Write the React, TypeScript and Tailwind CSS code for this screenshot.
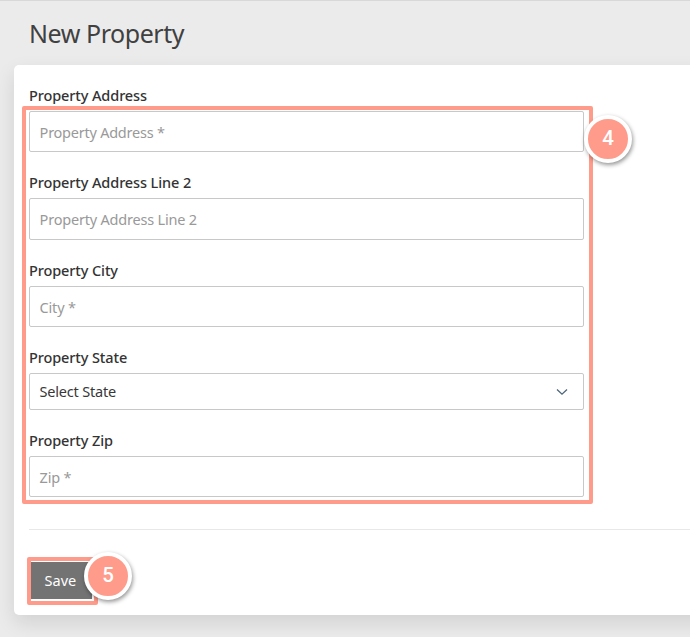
import React from "react";

type FieldProps = {
  label: string;
  placeholder: string;
  boxClass: string;
  placeholderClass: string;
};

function Label({ text }: { text: string }) {
  return (
    <label className="flex h-[31px] items-center text-[14.5px] font-medium text-[#333]">
      <span className="whitespace-nowrap tracking-[-0.11px]">{text}</span>
    </label>
  );
}

function Field({ label, placeholder, boxClass, placeholderClass }: FieldProps) {
  return (
    <div>
      <Label text={label} />
      <div className={`flex items-center rounded-[2px] border border-[#c8c8c8] bg-white pl-[9.6px] text-[14.5px] text-[#999] ${boxClass}`}>
        <span className={`whitespace-nowrap ${placeholderClass}`}>{placeholder}</span>
      </div>
    </div>
  );
}

function Step({ value, className }: { value: number; className: string }) {
  return (
    <div
      className={`absolute flex size-12 items-center justify-center rounded-full border-4 border-white bg-[#ff9b8a] pb-[2px] font-[Roboto,sans-serif] text-[20.5px] font-medium text-white shadow-[1px_2px_4px_rgba(0,0,0,0.42)] ${className}`}
    >
      {value}
    </div>
  );
}

export default function App() {
  return (
    <div className="h-[637px] w-[690px] overflow-hidden border-t border-[#d8d8d8] bg-[#ebebeb] pl-[14px] font-['Noto_Sans','Open_Sans',sans-serif]">
      <h1 className="flex h-16 items-center pt-[1px] pl-[15px] text-[25px] font-normal text-[#404040]">
        <span className="whitespace-nowrap tracking-[-0.44px]">New Property</span>
      </h1>
      <main className="h-[550px] w-[720px] rounded-[5px] bg-white pt-[15px] pl-[15px] shadow-[0_8px_20px_rgba(0,0,0,0.11)]">
        <form className="relative w-[555px]">
          <div className="flex flex-col gap-[15px]">
            <Field label="Property Address" placeholder="Property Address *" boxClass="h-[41px] pt-[3px]" placeholderClass="tracking-[-0.24px]" />
            <Field label="Property Address Line 2" placeholder="Property Address Line 2" boxClass="h-[42px] pt-[1px]" placeholderClass="tracking-[-0.2px]" />
            <Field label="Property City" placeholder="City *" boxClass="h-[41px] pt-[3px]" placeholderClass="tracking-[-0.2px]" />
            <div>
              <Label text="Property State" />
              <div className="flex h-[37px] items-center justify-between rounded-[2px] border border-[#c8c8c8] pr-[15px] pl-[9.6px] text-[14.5px] text-[#383838]">
                <span className="tracking-[-0.2px]">Select State</span>
                <svg width="12" height="8" viewBox="0 0 12 8" fill="none" stroke="#4f6678" strokeWidth="1.3">
                  <path d="M1 1.5 6 6.2 11 1.5" />
                </svg>
              </div>
            </div>
            <Field label="Property Zip" placeholder="Zip *" boxClass="h-[41px] pt-[3px]" placeholderClass="tracking-[-0.2px]" />
          </div>
          <div className="pointer-events-none absolute top-[26px] -left-[7px] h-[398px] w-[571px] rounded-[2px] border-4 border-[#ff9b8a]" />
          <Step value={4} className="top-[35px] left-[555px]" />
        </form>
        <hr className="mt-8 border-[#e8e8e8]" />
        <div className="relative mt-[27px] -ml-[2px] h-12 w-[71px] rounded-[2px] border-4 border-[#ff9b8a] pt-[1px]">
          <button type="button" className="flex h-[37px] w-[61px] items-center bg-[#737373] pl-[13.6px] text-[14.5px] text-white">
            <span>Save</span>
          </button>
          <Step value={5} className="-top-[9px] left-[53px]" />
        </div>
      </main>
    </div>
  );
}
